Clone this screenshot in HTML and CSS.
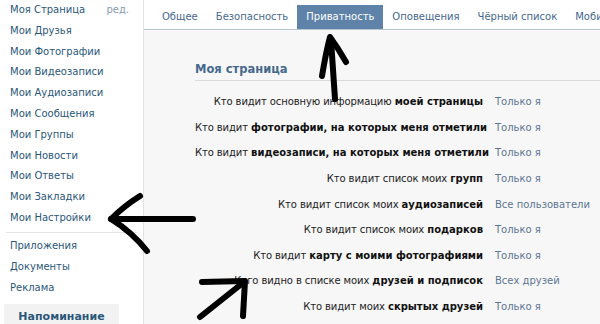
FILE: index.html
```html
<!DOCTYPE html>
<html lang="ru">
<head>
  <meta charset="UTF-8" />
  <title>Мои Настройки</title>
  <link rel="stylesheet" href="styles.css">
</head>
<body>
  <div class="page">
    <div class="sidebar">
      <ul class="menu">
        <li><a href="#">Моя Страница</a><span class="edit">ред.</span></li>
        <li><a href="#">Мои Друзья</a></li>
        <li><a href="#">Мои Фотографии</a></li>
        <li><a href="#">Мои Видеозаписи</a></li>
        <li><a href="#">Мои Аудиозаписи</a></li>
        <li><a href="#">Мои Сообщения</a></li>
        <li><a href="#">Мои Группы</a></li>
        <li><a href="#">Мои Новости</a></li>
        <li><a href="#">Мои Ответы</a></li>
        <li><a href="#">Мои Закладки</a></li>
        <li><a href="#">Мои Настройки</a></li>
      </ul>
      <ul class="menu extra">
        <li><a href="#">Приложения</a></li>
        <li><a href="#">Документы</a></li>
        <li><a href="#">Реклама</a></li>
      </ul>
      <div class="reminder">Напоминание</div>
    </div>

    <div class="main">
      <div class="tabs">
        <a href="#">Общее</a>
        <a href="#">Безопасность</a>
        <a href="#" class="active">Приватность</a>
        <a href="#">Оповещения</a>
        <a href="#">Чёрный список</a>
        <a href="#">Мобильные сервисы</a>
      </div>

      <div class="section">
        <h2>Моя страница</h2>
        <div class="rows">
          <div class="label">Кто видит основную информацию <b>моей страницы</b></div>
          <div class="value">Только я</div>

          <div class="label">Кто видит <b>фотографии, на которых меня отметили</b></div>
          <div class="value">Только я</div>

          <div class="label">Кто видит <b>видеозаписи, на которых меня отметили</b></div>
          <div class="value">Только я</div>

          <div class="label">Кто видит список моих <b>групп</b></div>
          <div class="value">Только я</div>

          <div class="label">Кто видит список моих <b>аудиозаписей</b></div>
          <div class="value">Все пользователи</div>

          <div class="label">Кто видит список моих <b>подарков</b></div>
          <div class="value">Только я</div>

          <div class="label">Кто видит <b>карту с моими фотографиями</b></div>
          <div class="value">Только я</div>

          <div class="label">Кого видно в списке моих <b>друзей и подписок</b></div>
          <div class="value">Всех друзей</div>

          <div class="label">Кто видит моих <b>скрытых друзей</b></div>
          <div class="value">Только я</div>
        </div>
      </div>
    </div>
  </div>

  <!-- hand-drawn marks on top of the screenshot -->
  <svg class="marks" width="600" height="324" viewBox="0 0 600 324">
    <g fill="none" stroke="#000" stroke-width="6" stroke-linecap="round" stroke-linejoin="round">
      <path d="M322 76 Q326 52 330 37 Q338 48 346 62" />
      <path d="M331 40 Q333 70 335 99" />
      <path d="M111 219 L193 219" />
      <path d="M140 196 Q124 206 111 219 Q132 232 147 251" />
      <path d="M202 282 L245 281 L243 316" />
      <path d="M200 317 L244 282" />
    </g>
  </svg>
</body>
</html>
```

FILE: styles.css
```css
* {
  box-sizing: border-box;
}

html, body {
  margin: 0;
  padding: 0;
  width: 600px;
  height: 324px;
  overflow: hidden;
  font-family: "DejaVu Sans", Tahoma, sans-serif;
  font-size: 10px;
  color: #222;
  background: #f7f7f7;
}

a {
  text-decoration: none;
}

.page {
  display: flex;
  height: 324px;
}

.sidebar {
  width: 144px;
  flex-shrink: 0;
  background: #fff;
  border-right: 1px solid #e3e3e3;
}

.menu {
  list-style: none;
  margin: 0;
  padding: 0 0 3px 0;
}

.menu li {
  display: flex;
  justify-content: space-between;
  height: 20.8px;
  line-height: 20.8px;
  padding: 0 14px 0 10px;
}

.menu a {
  color: #2b587a;
}

.edit {
  color: #8a9aae;
}

.extra {
  margin: 0 6px;
  padding: 2px 0 6px;
  border-top: 1px solid #e4e4e4;
}

.extra li {
  padding-left: 4px;
  height: 21px;
  line-height: 21px;
}

.reminder {
  margin: 0 24px 0 4px;
  padding: 6px 0 0 0;
  height: 20px;
  background: #f2f2f2;
  color: #2b587a;
  font-weight: bold;
  font-size: 11px;
  text-align: center;
}

.main {
  flex: 1;
  min-width: 0;
}

.tabs {
  display: flex;
  align-items: flex-end;
  height: 30px;
  padding-left: 9px;
  background: #fff;
  border-bottom: 1px solid #b7c4d2;
  white-space: nowrap;
  overflow: hidden;
}

.tabs a {
  display: block;
  padding: 0 9px;
  height: 24px;
  line-height: 24px;
  color: #45688e;
}

.tabs a.active {
  background: #5e82a8;
  color: #fff;
}

.section {
  padding: 32px 0 0 51px;
}

.section h2 {
  margin: 0 0 8px;
  padding-bottom: 4px;
  font-size: 11.5px;
  color: #45688e;
  border-bottom: 1px solid #dadada;
}

.rows {
  display: grid;
  grid-template-columns: 288px 1fr;
  column-gap: 12px;
  grid-auto-rows: 25.6px;
  align-items: center;
}

.label {
  text-align: right;
  white-space: nowrap;
  letter-spacing: -0.1px;
}

.label b {
  color: #111;
  letter-spacing: 0;
}

.value {
  color: #5c7592;
  white-space: nowrap;
}

.marks {
  position: absolute;
  left: 0;
  top: 0;
  pointer-events: none;
}
```
